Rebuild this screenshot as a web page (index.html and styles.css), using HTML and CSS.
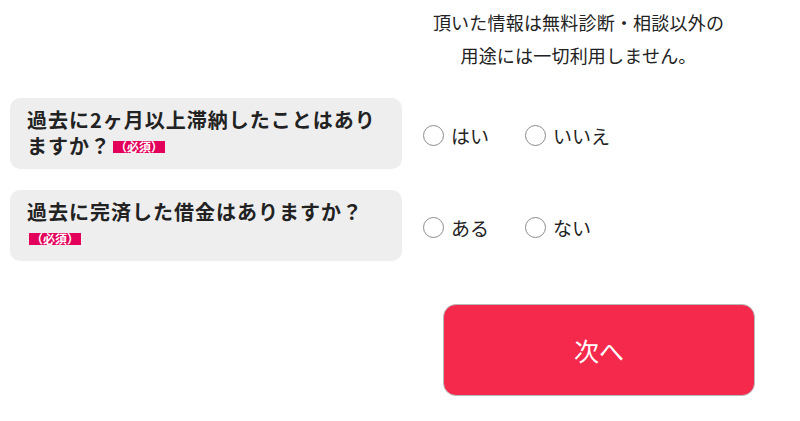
FILE: index.html
```html
<!DOCTYPE html>
<html lang="ja">
<head>
    <meta charset="UTF-8">
    <meta name="viewport" content="width=device-width, initial-scale=1.0">
    <title>無料診断</title>
    <link rel="stylesheet" href="styles.css">
</head>
<body>

<form class="form" onsubmit="return false;">
    <!-- privacy note above the answers column -->
    <p class="note">頂いた情報は無料診断・相談以外の<br>用途には一切利用しません。</p>

    <div class="question">過去に2ヶ月以上滞納したことはありますか？<span class="required">（必須）</span></div>
    <div class="answers">
        <label class="option"><input type="radio" name="arrears" value="yes">はい</label>
        <label class="option"><input type="radio" name="arrears" value="no">いいえ</label>
    </div>

    <div class="question">過去に完済した借金はありますか？<span class="required">（必須）</span></div>
    <div class="answers">
        <label class="option"><input type="radio" name="repaid" value="yes">ある</label>
        <label class="option"><input type="radio" name="repaid" value="no">ない</label>
    </div>

    <button class="next" type="submit">次へ</button>
</form>

</body>
</html>
```

FILE: styles.css
```css
body {
    margin: 0;
    background: #fff;
    color: #222;
    font-family: "Noto Sans CJK JP", "Noto Sans", sans-serif;
}
.form {
    display: grid;
    grid-template-columns: 392px 353px;
    align-items: center;
    padding: 0 0 0 10px;
}
.note {
    grid-column: 2;
    margin: 6px 0 26px;
    font-size: 18px;
    line-height: 33px;
    letter-spacing: 0.2px;
    text-align: center;
}
.question {
    grid-column: 1;
    background: #eeeeee;
    border-radius: 10px;
    padding: 9px 17px 10px 17px;
    font-size: 20px;
    font-weight: bold;
    line-height: 26px;
    letter-spacing: 1px;
    margin-bottom: 21px;
}
.required {
    display: inline-block;
    background: #e2005a;
    color: #fff;
    font-size: 12px;
    font-weight: bold;
    line-height: 12px;
    padding: 0 2px;
    margin-left: 2px;
    letter-spacing: 0;
    vertical-align: 2px;
}
.answers {
    grid-column: 2;
    display: flex;
    gap: 36px;
    padding-left: 21px;
    margin-bottom: 18px;
}
.option {
    display: flex;
    align-items: center;
    font-size: 19px;
    cursor: pointer;
}
.option input {
    appearance: none;
    width: 21px;
    height: 21px;
    margin: 0 7px 0 0;
    border: 1.5px solid #8c8c8c;
    border-radius: 50%;
    background: #fff;
}
.option input:checked {
    background: radial-gradient(#3478f6 45%, #fff 50%);
}
.next {
    grid-column: 2;
    justify-self: end;
    width: 312px;
    height: 92px;
    margin-top: 22px;
    background: #f5294b;
    color: #fff;
    border: 1px solid #b9b9b9;
    border-radius: 13px;
    font-family: "Noto Sans CJK JP", sans-serif;
    font-size: 25px;
    cursor: pointer;
}
.next:hover {
    background: #e21d3e;
}
```
